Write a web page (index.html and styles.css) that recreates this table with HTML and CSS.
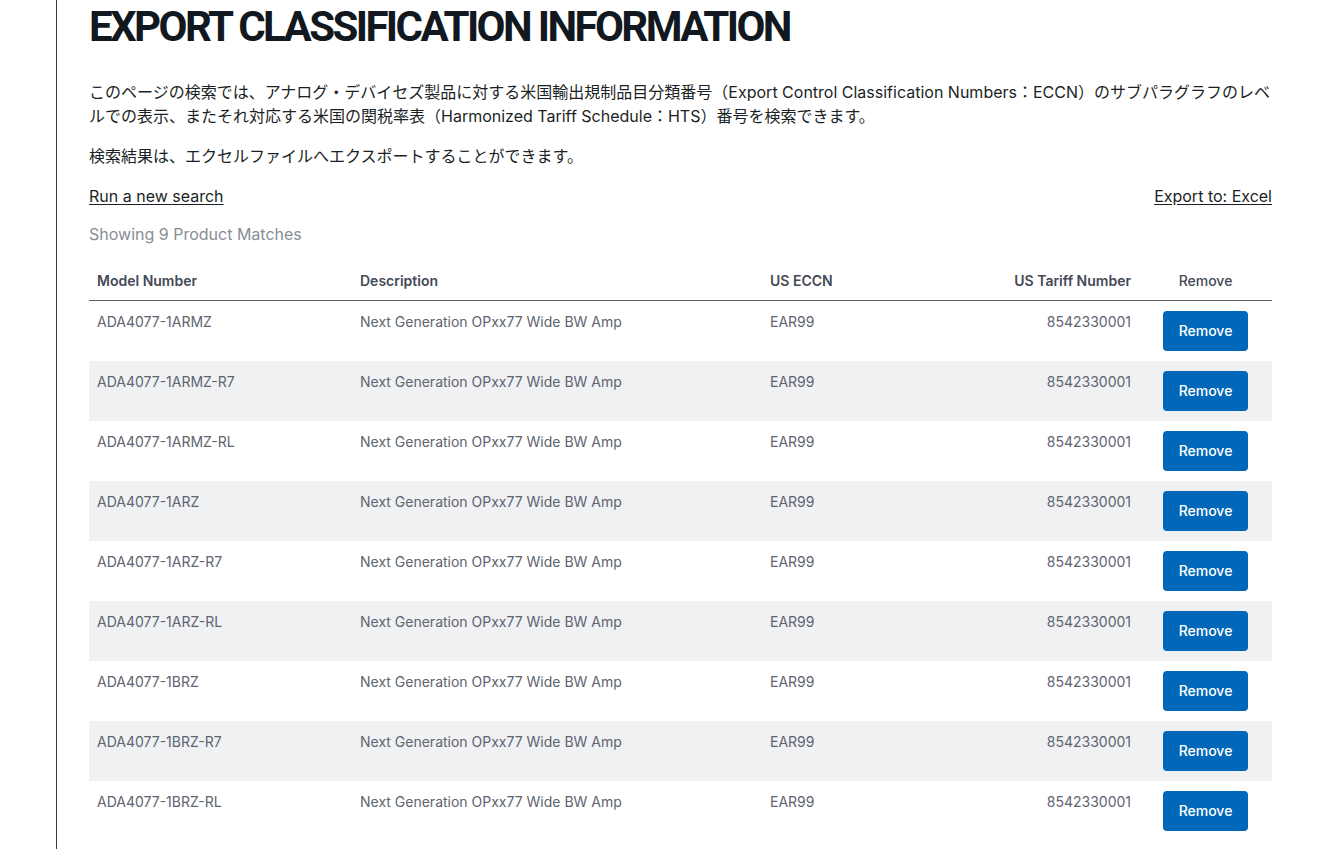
FILE: index.html
```html
<!DOCTYPE html>
<html lang="ja">
<head>
<meta charset="utf-8">
<title>Export Classification Information</title>
<link rel="stylesheet" href="styles.css">
</head>
<body>
<div class="page">
  <div class="rail"></div>
  <main class="content">
    <h1 class="title">EXPORT CLASSIFICATION INFORMATION</h1>
    <p class="intro">このページの検索では、アナログ・デバイセズ製品に対する米国輸出規制品目分類番号（Export Control Classification Numbers：ECCN）のサブパラグラフのレベルでの表示、またそれ対応する米国の関税率表（Harmonized Tariff Schedule：HTS）番号を検索できます。</p>
    <p class="intro">検索結果は、エクセルファイルへエクスポートすることができます。</p>
    <div class="links">
      <a href="#" class="link">Run a new search</a>
      <a href="#" class="link">Export to: Excel</a>
    </div>
    <div class="count">Showing 9 Product Matches</div>
    <table class="results">
      <thead>
        <tr>
          <th class="c-model">Model Number</th>
          <th class="c-desc">Description</th>
          <th class="c-eccn">US ECCN</th>
          <th class="c-tariff">US Tariff Number</th>
          <th class="c-remove">Remove</th>
        </tr>
      </thead>
      <tbody>
        <tr><td>ADA4077-1ARMZ</td><td>Next Generation OPxx77 Wide BW Amp</td><td>EAR99</td><td class="c-tariff">8542330001</td><td class="c-remove"><button class="btn">Remove</button></td></tr>
        <tr><td>ADA4077-1ARMZ-R7</td><td>Next Generation OPxx77 Wide BW Amp</td><td>EAR99</td><td class="c-tariff">8542330001</td><td class="c-remove"><button class="btn">Remove</button></td></tr>
        <tr><td>ADA4077-1ARMZ-RL</td><td>Next Generation OPxx77 Wide BW Amp</td><td>EAR99</td><td class="c-tariff">8542330001</td><td class="c-remove"><button class="btn">Remove</button></td></tr>
        <tr><td>ADA4077-1ARZ</td><td>Next Generation OPxx77 Wide BW Amp</td><td>EAR99</td><td class="c-tariff">8542330001</td><td class="c-remove"><button class="btn">Remove</button></td></tr>
        <tr><td>ADA4077-1ARZ-R7</td><td>Next Generation OPxx77 Wide BW Amp</td><td>EAR99</td><td class="c-tariff">8542330001</td><td class="c-remove"><button class="btn">Remove</button></td></tr>
        <tr><td>ADA4077-1ARZ-RL</td><td>Next Generation OPxx77 Wide BW Amp</td><td>EAR99</td><td class="c-tariff">8542330001</td><td class="c-remove"><button class="btn">Remove</button></td></tr>
        <tr><td>ADA4077-1BRZ</td><td>Next Generation OPxx77 Wide BW Amp</td><td>EAR99</td><td class="c-tariff">8542330001</td><td class="c-remove"><button class="btn">Remove</button></td></tr>
        <tr><td>ADA4077-1BRZ-R7</td><td>Next Generation OPxx77 Wide BW Amp</td><td>EAR99</td><td class="c-tariff">8542330001</td><td class="c-remove"><button class="btn">Remove</button></td></tr>
        <tr><td>ADA4077-1BRZ-RL</td><td>Next Generation OPxx77 Wide BW Amp</td><td>EAR99</td><td class="c-tariff">8542330001</td><td class="c-remove"><button class="btn">Remove</button></td></tr>
      </tbody>
    </table>
  </main>
</div>
</body>
</html>
```
FILE: styles.css
```css
* { box-sizing: border-box; }
html, body { margin: 0; padding: 0; background: #fff; }
body { font-family: Inter, "Noto Sans CJK JP", sans-serif; color: #1b1f26; }

.page { display: flex; min-height: 849px; }
.rail { width: 57px; flex: 0 0 57px; border-right: 1px solid #3c3c3c; }
.content { flex: 0 0 1183px; margin-left: 32px; }

.title {
  margin: 0;
  padding-top: 3px;
  font-family: Roboto, sans-serif;
  font-weight: 700;
  font-size: 42px;
  line-height: 48px;
  letter-spacing: -2.6px;
  color: #121820;
}

.intro {
  margin: 29px 0 0;
  font-family: Inter, "Noto Sans CJK JP", sans-serif;
  font-size: 16px;
  line-height: 24px;
  color: #1b1f26;
}
.intro + .intro { margin-top: 16px; }

.links {
  display: flex;
  justify-content: space-between;
  margin-top: 16px;
  font-family: Inter, sans-serif;
  font-size: 16px;
  line-height: 24px;
}
.link { color: #1b1f26; text-decoration: underline; text-underline-offset: 2px; }

.count {
  margin-top: 14px;
  font-family: Inter, sans-serif;
  font-size: 16px;
  line-height: 24px;
  color: #888d95;
}

.results {
  width: 100%;
  margin-top: 11px;
  border-collapse: collapse;
  font-size: 14px;
}
.results th {
  height: 43px;
  padding: 0 8px 11px;
  text-align: left;
  font-weight: 600;
  color: #434955;
  border-bottom: 1px solid #5a5e66;
  vertical-align: bottom;
}
.results td {
  height: 60px;
  padding: 12px 8px 0;
  vertical-align: top;
  color: #5e6470;
  line-height: 17px;
}
.results tbody tr:nth-child(even) { background: #f0f1f3; }

.c-model { width: 263px; }
.c-desc { width: 410px; }
.c-eccn { width: 200px; }
.results .c-tariff { text-align: right; }
.results th.c-remove { text-align: center; width: 133px; font-weight: 500; }
.results td.c-remove { text-align: center; padding: 10px 8px; vertical-align: middle; }

.btn {
  width: 85px;
  height: 40px;
  border: 0;
  border-radius: 4px;
  background: #0067b9;
  color: #fff;
  font-family: Inter, sans-serif;
  font-size: 14px;
  font-weight: 500;
  cursor: pointer;
}
```
